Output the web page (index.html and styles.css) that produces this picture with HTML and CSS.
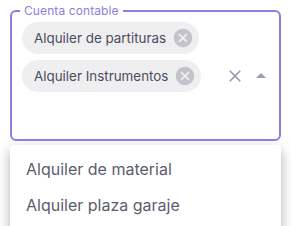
FILE: index.html
```html
<!DOCTYPE html>
<html lang="es">
<head>
<meta charset="utf-8">
<link rel="stylesheet" href="styles.css">
</head>
<body>
<div class="field">
  <div class="root">
    <span class="label">Cuenta contable</span>
    <div class="tags">
      <div class="chip">
        <span class="chip-label">Alquiler de partituras</span>
        <svg class="chip-del" viewBox="0 0 24 24"><path d="M12 2C6.47 2 2 6.47 2 12s4.47 10 10 10 10-4.47 10-10S17.530 2 12 2zm5 13.59L15.59 17 12 13.41 8.41 17 7 15.59 10.59 12 7 8.41 8.41 7 12 10.59 15.59 7 17 8.41 13.41 12 17 15.59z"/></svg>
      </div>
      <div class="chip">
        <span class="chip-label">Alquiler Instrumentos</span>
        <svg class="chip-del" viewBox="0 0 24 24"><path d="M12 2C6.47 2 2 6.47 2 12s4.47 10 10 10 10-4.47 10-10S17.53 2 12 2zm5 13.59L15.59 17 12 13.41 8.41 17 7 15.59 10.59 12 7 8.41 8.41 7 12 10.59 15.59 7 17 8.41 13.41 12 17 15.59z"/></svg>
      </div>
      <input class="input" type="text" aria-label="Cuenta contable">
    </div>
    <div class="adorn">
      <span class="btn clear"><svg viewBox="0 0 24 24"><path d="M19 6.41 17.59 5 12 10.59 6.41 5 5 6.41 10.59 12 5 17.59 6.41 19 12 13.41 17.59 19 19 17.59 13.41 12z"/></svg></span>
      <span class="btn popup"><svg viewBox="0 0 24 24"><path d="m7 14 5-5 5 5z"/></svg></span>
    </div>
  </div>
  <div class="paper">
    <ul class="listbox">
      <li class="option">Alquiler de material</li>
      <li class="option">Alquiler plaza garaje</li>
    </ul>
  </div>
</div>
</body>
</html>
```

FILE: styles.css
```css
* { box-sizing: border-box; }
html, body { margin: 0; padding: 0; background: #fff; }
body {
  font-family: Inter, "Noto Sans", sans-serif;
  overflow: hidden;
}
.field {
  margin: 10px 0 0 10px;
  width: 271px;
}
.root {
  position: relative;
  height: 131px;
  border: 2px solid #8b7fdc;
  border-radius: 6px;
  padding: 7px 4px 7px 7px;
  display: grid;
  grid-template-columns: 1fr auto;
  align-items: center;
}
.label {
  position: absolute;
  left: 8px;
  top: -8px;
  padding: 0 4px;
  background: #fff;
  font-size: 12px;
  line-height: 14px;
  color: #8c82de;
  letter-spacing: 0.1px;
}
.tags {
  display: flex;
  flex-wrap: wrap;
  align-self: stretch;
}
.chip {
  display: inline-flex;
  align-items: center;
  height: 32px;
  margin: 3px;
  border-radius: 16px;
  background: #efeff2;
  color: #4c4c58;
  font-size: 13.4px;
}
.chip-label {
  padding: 0 12px;
  white-space: nowrap;
}
.chip-del {
  width: 22px;
  height: 22px;
  margin: 0 5px 0 -6px;
  fill: #c3c3c9;
}
.input {
  display: block;
  width: 100%;
  height: 38px;
  border: 0;
  outline: none;
  padding: 7px 4px 7px 5px;
  font: inherit;
  background: transparent;
}
.adorn {
  display: flex;
  align-items: center;
}
.btn {
  display: flex;
  align-items: center;
  justify-content: center;
  width: 28px;
  height: 28px;
}
.btn svg { fill: #9d9db0; }
.clear { margin-right: -2px; }
.clear svg { width: 20px; height: 20px; }
.popup svg { width: 24px; height: 24px; }
.paper {
  margin-top: 4px;
  background: #fff;
  border-radius: 4px;
  box-shadow: 0 5px 5px -3px rgba(0,0,0,0.2), 0 8px 10px 1px rgba(0,0,0,0.14), 0 3px 14px 2px rgba(0,0,0,0.12);
}
.listbox {
  list-style: none;
  margin: 0;
  padding: 6px 0 8px;
}
.option {
  padding: 6px 16px;
  font-size: 16px;
  line-height: 24px;
  color: #5c5c6e;
}
```
